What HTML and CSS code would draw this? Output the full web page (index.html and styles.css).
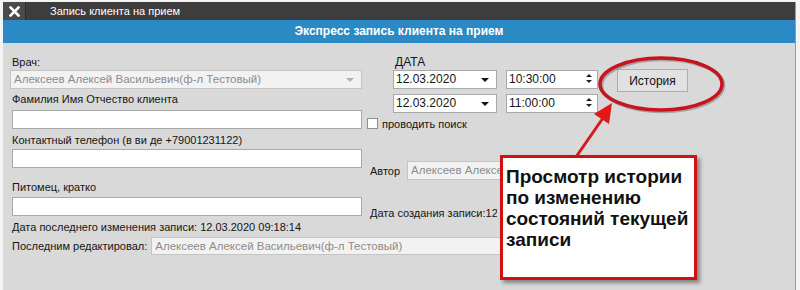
FILE: index.html
```html
<!DOCTYPE html>
<html lang="ru">

<head>
    <meta charset="utf-8">
    <meta name="viewport" content="width=device-width, initial-scale=1.0">
    <title>Запись клиента на прием</title>
    <link rel="stylesheet" href="styles.css">
</head>

<body>
    <div class="window">
        <div class="titlebar">
            <div class="close">
                <svg width="11" height="11" viewBox="0 0 11 11">
                    <path d="M1.5 1.5 L9.5 9.5 M9.5 1.5 L1.5 9.5" stroke="#fff" stroke-width="2.6" stroke-linecap="square" />
                </svg>
            </div>
            <div class="title">Запись клиента на прием</div>
        </div>
        <div class="header">Экспресс запись клиента на прием</div>

        <div class="content">
            <div class="col-left">
                <div class="label l-doctor">Врач:</div>
                <div class="field disabled combo">Алексеев Алексей Васильевич(ф-л Тестовый)<span class="tri gray"></span></div>

                <div class="label l-gap3">Фамилия Имя Отчество клиента</div>
                <div class="field input i-gap4"></div>

                <div class="label l-gap4">Контактный телефон (в ви де +79001231122)</div>
                <div class="field input i-gap2"></div>

                <div class="label l-gap12">Питомец, кратко</div>
                <div class="field input i-gap3"></div>

                <div class="label l-gap4">Дата последнего изменения записи: 12.03.2020 09:18:14</div>
                <div class="editor-row">
                    <span class="editor-label">Последним редактировал:</span>
                    <div class="field disabled editor">Алексеев Алексей Васильевич(ф-л Тестовый)</div>
                </div>
            </div>

            <div class="col-right">
                <div class="label date-label">ДАТА</div>
                <div class="dates">
                    <div class="field input date">12.03.2020<span class="tri"></span></div>
                    <div class="field input date">10:30:00<span class="spin"><i class="up"></i><i class="down"></i></span></div>
                    <button class="history">История</button>
                    <div class="field input date">12.03.2020<span class="tri"></span></div>
                    <div class="field input date">11:00:00<span class="spin"><i class="up"></i><i class="down"></i></span></div>
                </div>
                <div class="check-row">
                    <span class="checkbox"></span>
                    <span>проводить поиск</span>
                </div>
                <div class="author-row">
                    <span class="author-label">Автор</span>
                    <div class="field disabled author">Алексеев Алексей Васильевич(ф-л Тестовый)</div>
                </div>
                <div class="label created">Дата создания записи:12.03.2020 09:18:14</div>
            </div>
        </div>
    </div>

    <svg class="marks" width="800" height="290" viewBox="0 0 800 290">
        <ellipse cx="662.5" cy="85.5" rx="61" ry="26" fill="none" stroke="rgba(0,0,0,0.25)" stroke-width="3.5" />
        <ellipse cx="661" cy="84" rx="61" ry="26" fill="none" stroke="#c8141c" stroke-width="3.5" />
        <line x1="576" y1="157" x2="603" y2="118" stroke="#d41a1a" stroke-width="3" />
        <polygon points="612,103 609,124 594,114" fill="#e01818" />
    </svg>

    <div class="callout">Просмотр истории по изменению состояний текущей записи</div>
</body>

</html>
```

FILE: styles.css
```css
body {
    margin: 0;
    background-color: #f4f4f4;
    font-family: "Liberation Sans", Arial, sans-serif;
    font-size: 11px;
    color: #151515;
    position: relative;
    width: 800px;
    height: 290px;
    overflow: hidden;
}

.window {
    width: 792px;
    height: 288px;
    margin: 2px 0 0 3px;
    background-color: #d9d9d9;
    border-right: 1px solid #9a9a9a;
}

.titlebar {
    height: 18px;
    display: flex;
    align-items: center;
    background-color: #3d3d3d;
    color: #fff;
}

.close {
    width: 22px;
    height: 18px;
    display: flex;
    align-items: center;
    justify-content: center;
    background-color: #4a4a4a;
    border-right: 1px solid #2c2c2c;
}

.title {
    margin-left: 24px;
}

.header {
    height: 23px;
    line-height: 23px;
    background-color: #2b8ac3;
    color: #fff;
    font-size: 12px;
    font-weight: bold;
    text-align: center;
}

.content {
    display: flex;
    padding-top: 12px;
}

.col-left {
    width: 350px;
    padding-left: 9px;
}

.label {
    line-height: 14px;
    white-space: nowrap;
}

.field {
    box-sizing: border-box;
    height: 19px;
    line-height: 17px;
    border: 1px solid #a9a9a9;
    background-color: #fff;
    position: relative;
    white-space: nowrap;
    overflow: hidden;
}

.disabled {
    background-color: #f2f2f2;
    border-color: #c4c4c4;
    color: #8c8c8c;
    padding-left: 3px;
    font-size: 11.5px;
}

.combo {
    margin-top: 1px;
    margin-left: -2px;
    width: 352px;
}

.l-gap3 { margin-top: 3px; }
.l-gap4 { margin-top: 4px; }
.l-gap12 { margin-top: 12px; }
.i-gap2 { margin-top: 2px; }
.i-gap3 { margin-top: 3px; }
.i-gap4 { margin-top: 4px; }

.tri {
    position: absolute;
    right: 7px;
    top: 7px;
    width: 0;
    height: 0;
    border-left: 4px solid transparent;
    border-right: 4px solid transparent;
    border-top: 4px solid #111;
}

.tri.gray {
    border-top-color: #b0b0b0;
}

.editor-row {
    margin-top: 3px;
    display: flex;
    align-items: center;
}

.editor-label {
    flex: none;
    white-space: nowrap;
}

.editor {
    flex: none;
    height: 18px;
    line-height: 16px;
    width: 352px;
    margin-left: 4px;
}

.col-right {
    margin-left: 5px;
}

.date-label {
    padding-left: 28px;
    font-size: 12px;
}

.dates {
    margin-top: 1px;
    margin-left: 26px;
    display: grid;
    grid-template-columns: 104px 92px 71px;
    grid-template-rows: 19px 19px;
    column-gap: 9px;
    row-gap: 5px;
}

.date {
    font-size: 12px;
    padding-left: 2px;
}

.history {
    grid-column: 3;
    grid-row: 1 / 3;
    align-self: start;
    margin: -1px 0 0 10px;
    width: 71px;
    height: 23px;
    background-color: #e1e1e1;
    border: 1px solid #adadad;
    font-family: "Liberation Sans", Arial, sans-serif;
    font-size: 12px;
    color: #111;
    padding: 0;
}

.spin {
    position: absolute;
    right: 5px;
    top: 3px;
    display: flex;
    flex-direction: column;
    gap: 3px;
}

.spin i {
    width: 0;
    height: 0;
    border-left: 3px solid transparent;
    border-right: 3px solid transparent;
}

.spin .up {
    border-bottom: 3px solid #222;
}

.spin .down {
    border-top: 3px solid #222;
}

.check-row {
    margin-top: 5px;
    display: flex;
    align-items: center;
    height: 11px;
}

.checkbox {
    box-sizing: border-box;
    width: 11px;
    height: 11px;
    border: 1px solid #8f8f8f;
    background-color: #fff;
    margin-right: 4px;
}

.author-row {
    margin-top: 32px;
    display: flex;
    align-items: center;
}

.author-label {
    width: 37px;
    padding-left: 3px;
}

/* the callout covers everything right of x=500 */
.author {
    width: 95px;
}

.created {
    margin-top: 26px;
    padding-left: 3px;
    width: 127px;
    overflow: hidden;
}

.marks {
    position: absolute;
    left: 0;
    top: 0;
    pointer-events: none;
}

.callout {
    position: absolute;
    left: 500px;
    top: 155px;
    width: 197px;
    height: 125px;
    box-sizing: border-box;
    border: 3px solid #cf1111;
    background-color: #fff;
    box-shadow: 3px 3px 4px rgba(0, 0, 0, 0.4);
    padding: 8px 1px 0 3px;
    font-size: 19px;
    line-height: 21px;
    font-weight: bold;
    color: #111;
}
```
